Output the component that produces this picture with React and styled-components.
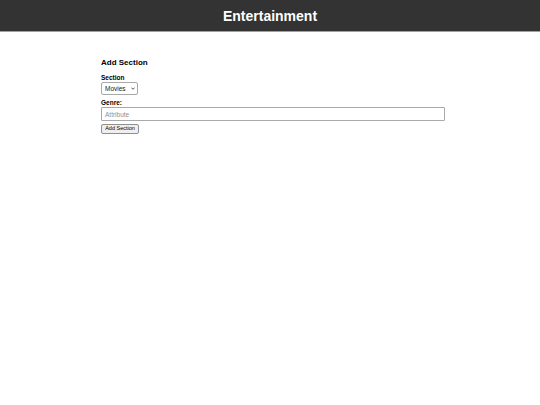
import React from 'react';
import styled, { createGlobalStyle } from 'styled-components';

const GlobalStyle = createGlobalStyle`
  html, body {
    margin: 0;
    padding: 0;
    background: #ffffff;
    font-family: "Liberation Sans", Arial, sans-serif;
  }
`;

const Header = styled.header`
  height: 31px;
  background: #333333;
  border-bottom: 1px solid #a0a0a0;
  display: flex;
  align-items: center;
  justify-content: center;
`;

const Title = styled.h1`
  margin: 0;
  color: #ffffff;
  font-size: 14px;
  font-weight: bold;
`;

const Main = styled.main`
  padding: 26px 95px 0 101px;
`;

const SectionTitle = styled.h3`
  margin: 0 0 7px;
  font-size: 8px;
  font-weight: bold;
  color: #000;
`;

const Form = styled.form`
  display: flex;
  flex-direction: column;
  align-items: flex-start;
`;

const Label = styled.label`
  font-size: 6.5px;
  font-weight: bold;
  color: #000;
  margin-bottom: 1px;
`;

const SelectWrap = styled.div`
  position: relative;
  margin-bottom: 4px;
`;

const Select = styled.select`
  appearance: none;
  -webkit-appearance: none;
  display: block;
  box-sizing: border-box;
  width: 37px;
  height: 13px;
  padding: 0 8px 0 3px;
  font-family: "Liberation Sans", Arial, sans-serif;
  font-size: 6.5px;
  border: 1px solid #a9a9a9;
  border-radius: 2px;
  background: #fff;
  color: #222;
  outline: none;
`;

const Chevron = styled.svg`
  position: absolute;
  right: 3px;
  top: 5px;
  width: 4px;
  height: 3px;
  pointer-events: none;
`;

const Input = styled.input`
  box-sizing: border-box;
  width: 100%;
  height: 14px;
  padding: 0 3px;
  margin-bottom: 3px;
  font-family: "Liberation Sans", Arial, sans-serif;
  font-size: 6.5px;
  border: 1px solid #a9a9a9;
  border-radius: 1px;
  outline: none;
  &::placeholder { color: #8f8f8f; }
`;

const Button = styled.button`
  box-sizing: border-box;
  font-family: "Liberation Sans", Arial, sans-serif;
  font-size: 5.5px;
  width: 38px;
  height: 10px;
  padding: 0;
  border: 1px solid #8f8f8f;
  border-radius: 2px;
  background: #efefef;
  color: #000;
  line-height: 1;
`;

export default function App() {
  return (
    <>
      <GlobalStyle />
      <Header>
        <Title>Entertainment</Title>
      </Header>
      <Main>
        <SectionTitle>Add Section</SectionTitle>
        <Form onSubmit={(e) => e.preventDefault()}>
          <Label htmlFor="section">Section</Label>
          <SelectWrap>
            <Select id="section" defaultValue="Movies">
              <option>Movies</option>
              <option>Music</option>
              <option>Books</option>
            </Select>
            <Chevron viewBox="0 0 4 3">
              <path d="M0.4 0.6 L2 2.3 L3.6 0.6" fill="none" stroke="#333" strokeWidth="0.8" />
            </Chevron>
          </SelectWrap>
          <Label htmlFor="genre">Genre:</Label>
          <Input id="genre" placeholder="Attribute" />
          <Button type="submit">Add Section</Button>
        </Form>
      </Main>
    </>
  );
}
